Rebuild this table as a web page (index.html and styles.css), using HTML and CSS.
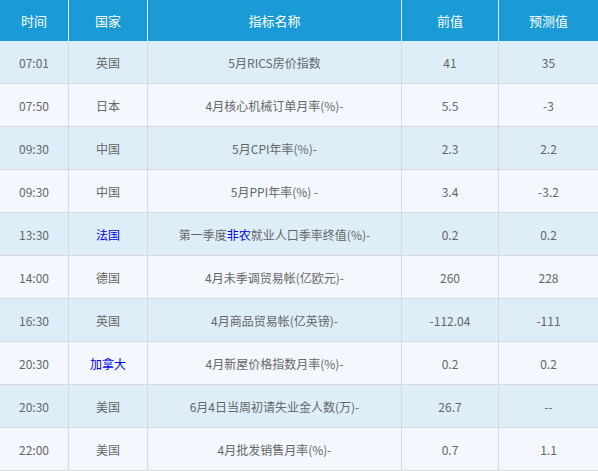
FILE: index.html
```html
<!DOCTYPE html>
<html lang="zh">
<head>
<meta charset="utf-8">
<link rel="stylesheet" href="styles.css">
</head>
<body>
<div class="table">
  <div class="row head">
    <div class="c c1">时间</div><div class="c c2">国家</div><div class="c c3">指标名称</div><div class="c c4">前值</div><div class="c c5">预测值</div>
  </div>
  <div class="row odd">
    <div class="c c1">07:01</div><div class="c c2">英国</div><div class="c c3">5月RICS房价指数</div><div class="c c4">41</div><div class="c c5">35</div>
  </div>
  <div class="row even">
    <div class="c c1">07:50</div><div class="c c2">日本</div><div class="c c3">4月核心机械订单月率(%)-</div><div class="c c4">5.5</div><div class="c c5">-3</div>
  </div>
  <div class="row odd">
    <div class="c c1">09:30</div><div class="c c2">中国</div><div class="c c3">5月CPI年率(%)-</div><div class="c c4">2.3</div><div class="c c5">2.2</div>
  </div>
  <div class="row even">
    <div class="c c1">09:30</div><div class="c c2">中国</div><div class="c c3">5月PPI年率(%) -</div><div class="c c4">3.4</div><div class="c c5">-3.2</div>
  </div>
  <div class="row odd">
    <div class="c c1">13:30</div><div class="c c2"><span class="link">法国</span></div><div class="c c3">第一季度<span class="link">非农</span>就业人口季率终值(%)-</div><div class="c c4">0.2</div><div class="c c5">0.2</div>
  </div>
  <div class="row even">
    <div class="c c1">14:00</div><div class="c c2">德国</div><div class="c c3">4月未季调贸易帐(亿欧元)-</div><div class="c c4">260</div><div class="c c5">228</div>
  </div>
  <div class="row odd">
    <div class="c c1">16:30</div><div class="c c2">英国</div><div class="c c3">4月商品贸易帐(亿英镑)-</div><div class="c c4">-112.04</div><div class="c c5">-111</div>
  </div>
  <div class="row even">
    <div class="c c1">20:30</div><div class="c c2"><span class="link">加拿大</span></div><div class="c c3">4月新屋价格指数月率(%)-</div><div class="c c4">0.2</div><div class="c c5">0.2</div>
  </div>
  <div class="row odd">
    <div class="c c1">20:30</div><div class="c c2">美国</div><div class="c c3">6月4日当周初请失业金人数(万)-</div><div class="c c4">26.7</div><div class="c c5">--</div>
  </div>
  <div class="row even">
    <div class="c c1">22:00</div><div class="c c2">美国</div><div class="c c3">4月批发销售月率(%)-</div><div class="c c4">0.7</div><div class="c c5">1.1</div>
  </div>
</div>
</body>
</html>
```
FILE: styles.css
```css
html, body {
  margin: 0;
  padding: 0;
  background: #f2f8fd;
  overflow: hidden;
}
.table {
  width: 598px;
  font-family: "Noto Sans CJK SC", "Noto Sans", sans-serif;
  font-size: 12px;
  color: #666;
}
.row {
  display: flex;
  height: 42px;
  border-bottom: 1px solid #d9d9d9;
}
.row.head {
  height: 41px;
  border-bottom: none;
  background: #1a9ad6;
  color: #fff;
  font-size: 13px;
}
.row.odd { background: #ddeef8; }
.row.even { background: #f2f8fd; }
.c {
  display: flex;
  align-items: center;
  justify-content: center;
  border-right: 1px solid #d9d9d9;
  box-sizing: border-box;
  white-space: nowrap;
}
.head .c { border-right-color: #d4e9f5; }
.c1 { width: 69px; }
.c2 { width: 79px; }
.c3 { width: 254px; }
.c4 { width: 97px; }
.c5 { flex: 1; border-right: none; }
.link { color: #0000ee; }
```
